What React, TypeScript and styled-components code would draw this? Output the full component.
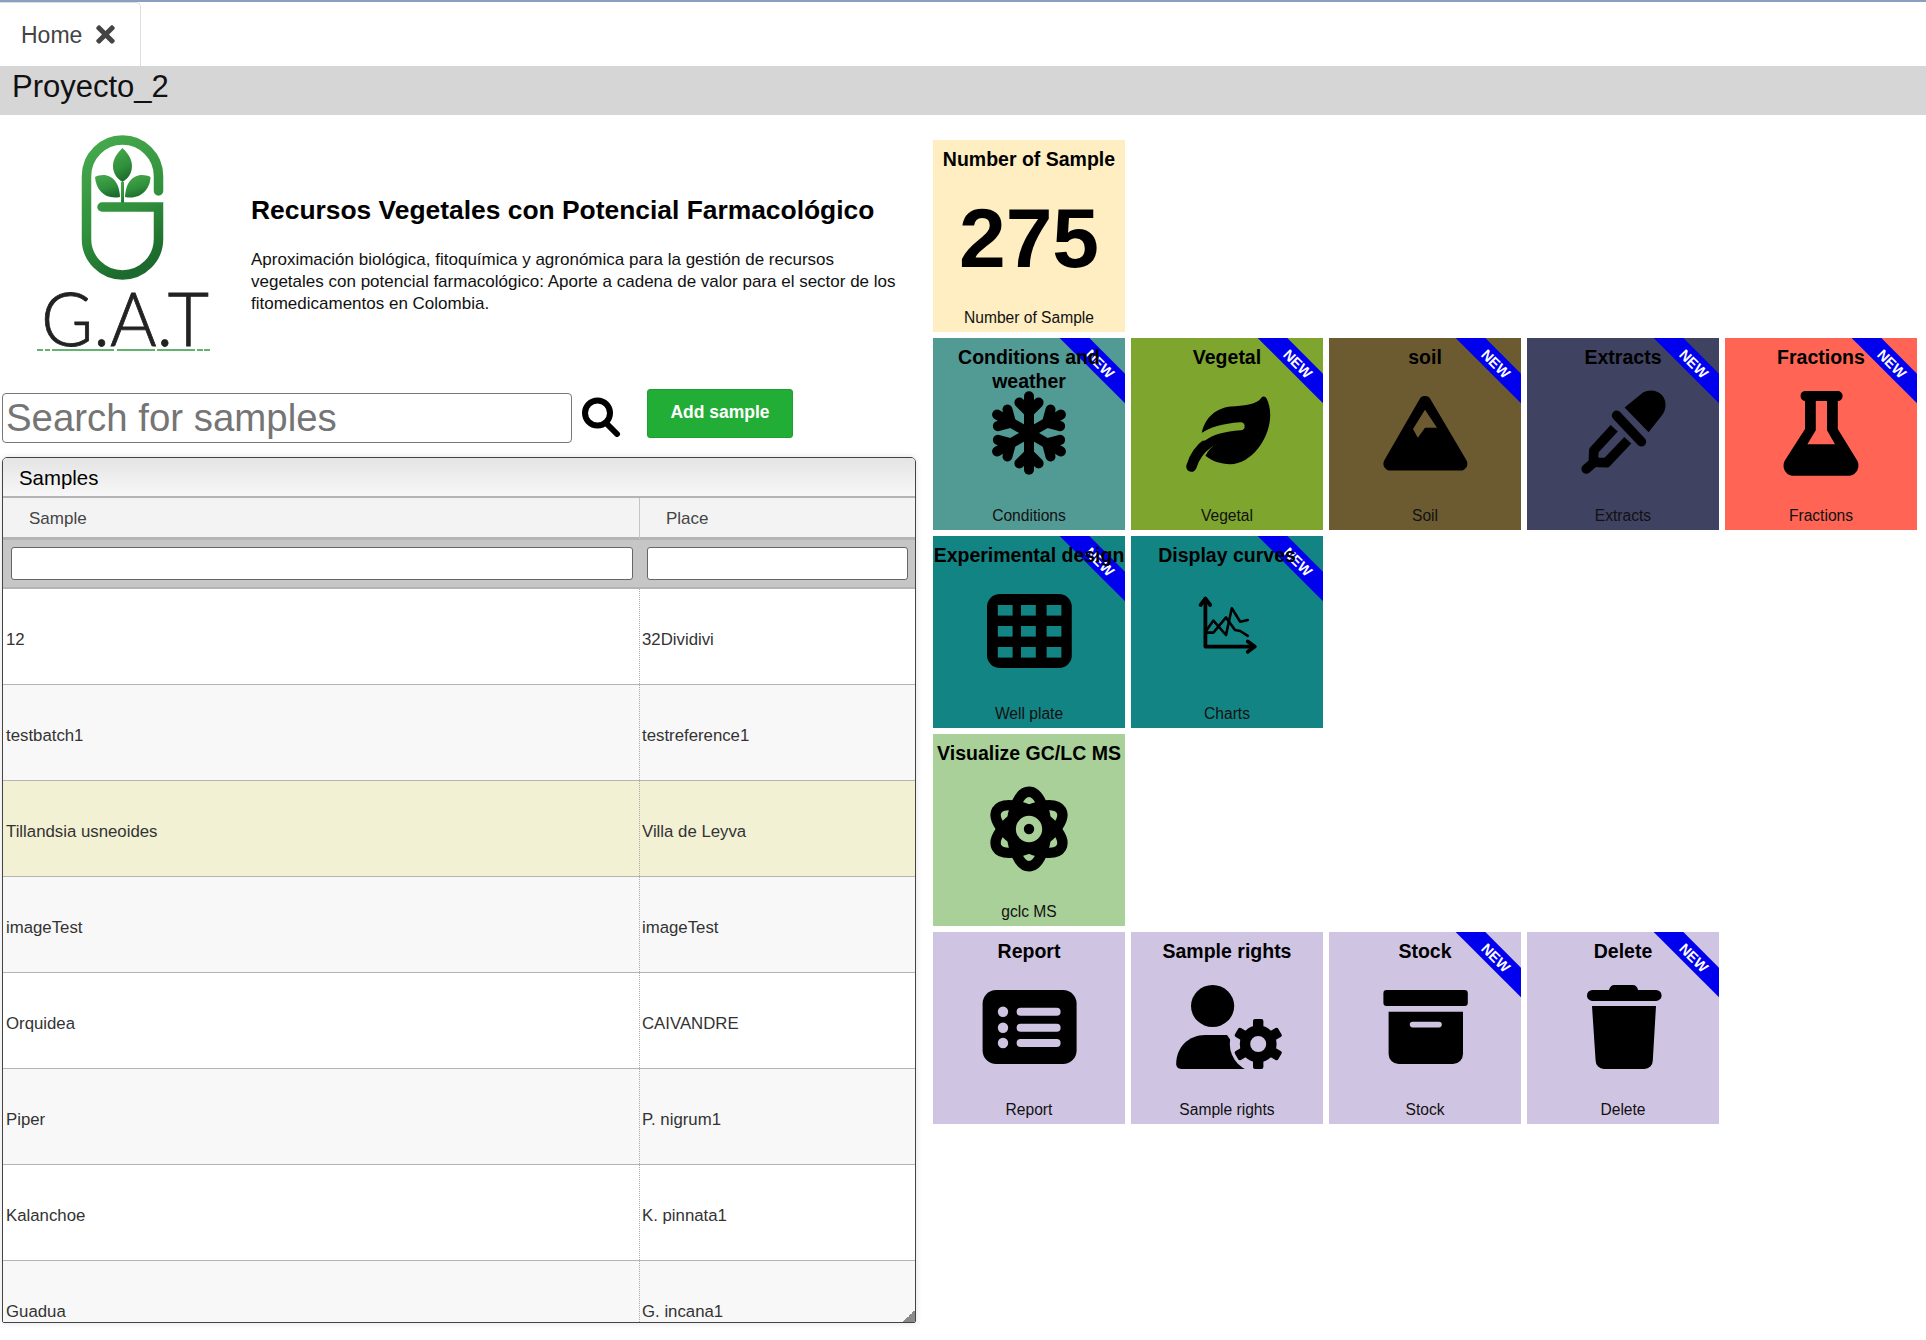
import React from "react";
import styled, { createGlobalStyle } from "styled-components";
import { FaTimes } from "react-icons/fa";

const GlobalStyle = createGlobalStyle`
  html, body {
    margin: 0;
    padding: 0;
    background: #fff;
    font-family: "Liberation Sans", Arial, sans-serif;
    color: #000;
  }
`;

const Page = styled.div`
  width: 1926px;
  height: 1340px;
  overflow: hidden;
  border-top: 2px solid #8d9dbf;
  box-sizing: border-box;
`;

const TabStrip = styled.div`
  height: 64px;
  display: flex;
  align-items: stretch;
`;

const Tab = styled.div`
  width: 141px;
  box-sizing: border-box;
  display: flex;
  align-items: center;
  gap: 10px;
  padding: 2px 0 0 21px;
  border: 1px solid #ddd;
  border-width: 1px 1px 0 0;
  border-top-right-radius: 5px;
  font-size: 23px;
  color: #444;
  svg {
    width: 27px;
    height: 27px;
    margin-top: -3px;
  }
`;

const ProjectBar = styled.div`
  height: 49px;
  background: #d6d6d6;
  padding-left: 12px;
  font-size: 31px;
  line-height: 42px;
  color: #111;
`;

const Main = styled.div`
  display: flex;
  gap: 13px;
`;

const LeftColumn = styled.div`
  width: 918px;
  padding-left: 2px;
`;

const Intro = styled.div`
  height: 274px;
  display: flex;
`;

const LogoBox = styled.div`
  width: 249px;
  flex: none;
  margin-left: -2px;
  margin-right: 2px;
`;

const IntroText = styled.div`
  padding-top: 78px;
`;

const Heading = styled.h1`
  margin: 0 0 22px;
  font-size: 26.4px;
  line-height: 34px;
  font-weight: 700;
  white-space: nowrap;
`;

const Summary = styled.p`
  margin: 0;
  width: 655px;
  font-size: 17px;
  line-height: 22px;
  color: #111;
`;

const SearchRow = styled.div`
  height: 68px;
  display: flex;
  align-items: flex-start;
`;

const SearchInput = styled.input`
  width: 570px;
  height: 50px;
  margin-top: 4px;
  box-sizing: border-box;
  border: 1px solid #777;
  border-radius: 4px;
  padding: 0 3px;
  font-family: inherit;
  font-size: 38.4px;
  &::placeholder {
    color: #757575;
    opacity: 1;
  }
`;

const SearchIconBox = styled.div`
  width: 75px;
  padding: 8px 0 0 9px;
  box-sizing: border-box;
`;

const AddButton = styled.button`
  width: 146px;
  height: 49px;
  background: #21ad36;
  border: 1px solid #1e9d31;
  border-radius: 3px;
  color: #fff;
  font-family: inherit;
  font-weight: 700;
  font-size: 17.5px;
  padding: 0 0 2px;
`;

const Panel = styled.div`
  position: relative;
  width: 914px;
  height: 866px;
  box-sizing: border-box;
  overflow: hidden;
  border: 1px solid #444;
  border-radius: 5px 5px 2px 2px;
  box-shadow: 0 0 6px rgba(0, 0, 0, 0.12);
`;

const PanelTitle = styled.div`
  height: 38px;
  padding-left: 16px;
  font-size: 20.4px;
  line-height: 40px;
  background: linear-gradient(#e4e4e4, #f7f7f7);
  border-bottom: 2px solid #b4b4b4;
`;

const ColumnGrid = styled.div`
  display: grid;
  grid-template-columns: 636px 1fr;
`;

const HeadRow = styled(ColumnGrid)`
  height: 39px;
  background: #f3f3f3;
  color: #444;
  font-size: 17px;
  line-height: 41px;
`;

const HeadCell = styled.div`
  padding-left: 26px;
  & + & {
    border-left: 1px solid #c4c4c4;
  }
`;

const FilterRow = styled(ColumnGrid)`
  height: 52px;
  box-sizing: border-box;
  background: #c6c6c6;
  border-top: 3px solid #b4b4b4;
  border-bottom: 2px solid #b4b4b4;
`;

const FilterCell = styled.div`
  padding: 7px 6px 0 8px;
  & + & {
    padding: 7px 7px 0 8px;
  }
`;

const FilterInput = styled.input`
  width: 100%;
  height: 33px;
  box-sizing: border-box;
  border: 1px solid #666;
  border-radius: 3px;
  background: #fff;
  padding: 0;
`;

const DataRow = styled(ColumnGrid)<{ $bg: string }>`
  height: 96px;
  box-sizing: border-box;
  background: ${(p) => p.$bg};
  border-bottom: 1px solid #b4b4b4;
  font-size: 16.8px;
  color: #333;
`;

const DataCell = styled.div`
  display: flex;
  align-items: center;
  padding: 7px 0 0 3px;
  & + & {
    border-left: 1px dotted #aaa;
    padding-left: 2px;
  }
`;

const ResizeGrip = styled.div`
  position: absolute;
  right: 0;
  bottom: 0;
  width: 12px;
  height: 12px;
  background: linear-gradient(135deg, transparent 50%, #8a8a8a 50%);
`;

const RightColumn = styled.div`
  padding-top: 25px;
  display: flex;
  flex-direction: column;
  gap: 6px;
`;

const TileRow = styled.div`
  display: flex;
  gap: 6px;
`;

const Tile = styled.div<{ $bg: string }>`
  --tile: ${(p) => p.$bg};
  position: relative;
  width: 192px;
  height: 192px;
  overflow: hidden;
  background: ${(p) => p.$bg};
  display: grid;
  grid-template-rows: 47px 96px 1fr;
  justify-items: center;
  text-align: center;
`;

const TileTitle = styled.div`
  position: relative;
  z-index: 1;
  width: 100%;
  padding-top: 7px;
  font-size: 19.5px;
  line-height: 24px;
  font-weight: 700;
`;

const TileCount = styled.div`
  font-size: 84px;
  line-height: 102px;
  font-weight: 700;
`;

const TileLabel = styled.div`
  align-self: end;
  padding-bottom: 4px;
  font-size: 15.6px;
  line-height: 20px;
  color: #111;
`;

const IconSvg = styled.svg`
  width: 96px;
  height: 96px;
  overflow: visible;
`;

const Ribbon = styled.div`
  position: absolute;
  top: 25px;
  left: 167px;
  width: 110px;
  height: 21px;
  margin: -10.5px 0 0 -55px;
  transform: rotate(45deg);
  background: #0000ee;
  color: #fff;
  font-size: 14.5px;
  font-weight: 700;
  line-height: 22px;
  text-align: center;
`;

const TileCut = "var(--tile)";

const Snowflake = () => (
  <IconSvg viewBox="0 0 24 24" fill="none" stroke="#000" strokeWidth="2.5" strokeLinecap="round" strokeLinejoin="round">
    {[0, 60, 120].map((a) => (
      <g key={a} transform={`rotate(${a} 12 12)`}>
        <path d="M12 2.8V21.2" />
        <path d="M9.6 4.4L12 6.8L14.4 4.4" />
        <path d="M9.6 19.6L12 17.2L14.4 19.6" />
      </g>
    ))}
  </IconSvg>
);

const Leaf = () => (
  <IconSvg viewBox="0 0 24 24">
    <path d="M5.7 12C6.5 8 9.5 5.7 13 5.4C16 5.2 19.4 5 20.6 3.2C21 2.7 21.6 2.8 21.9 3.4C22.5 4.6 22.8 6 22.8 7.5C22.8 13.5 18 19.8 12.8 19.8C10.4 19.8 8.2 19 6.6 17.7C8 14.8 11 13.3 15 12.8C16.2 12.7 16.6 11.7 16.4 10.9C16.2 10 15.5 9.8 14.6 9.9C11 10.2 7.8 10.8 5.7 12Z" />
    <path d="M3.1 20.4C4.5 15.5 8.5 12.6 15.4 11.5" fill="none" stroke="#000" strokeWidth="2.6" strokeLinecap="round" />
    <path d="M6.2 12.9C8 11.5 11 10.6 15.4 10.3" fill="none" stroke={TileCut} strokeWidth="2" strokeLinecap="round" />
  </IconSvg>
);

const Mountain = () => (
  <IconSvg viewBox="0 0 24 24">
    <path
      fillRule="evenodd"
      d="M10.6 3.6A1.6 1.6 0 0 1 13.4 3.6L22.4 18.9A1.7 1.7 0 0 1 20.9 21.4H3.3A1.7 1.7 0 0 1 1.8 18.9ZM12 6.2L9 11L10.2 13.2L12 10.7H15Z"
    />
  </IconSvg>
);

const Dropper = () => (
  <IconSvg viewBox="0 0 24 24">
    <path d="M12.4 5.6L17 1.9C18.5 1 20.5 1.2 21.7 2.5C23 3.9 22.9 6.2 21.7 7.6L18.4 11.8Z" />
    <path d="M10.4 7.6L16.6 14.2" fill="none" stroke="#000" strokeWidth="2.4" strokeLinecap="round" />
    <path d="M9.8 10.8L4.7 16.4L4.6 19.3L7.9 19.4L13.2 13.8" fill="none" stroke="#000" strokeWidth="2.4" strokeLinejoin="round" />
    <path d="M2.8 21L4.8 19.3" fill="none" stroke="#000" strokeWidth="2.4" strokeLinecap="round" />
  </IconSvg>
);

const Flask = () => (
  <IconSvg viewBox="0 0 24 24">
    <path
      fillRule="evenodd"
      d="M8 1.5H16.2A1.2 1.2 0 0 1 17.4 2.7A1.2 1.2 0 0 1 16.2 4V11L21 18.8C22 20.6 20.8 22.7 18.8 22.7H5.2C3.2 22.7 2 20.6 3 18.8L8 11V4A1.2 1.2 0 0 1 6.9 2.7A1.2 1.2 0 0 1 8 1.5ZM10.7 4V11.3L8.6 14.8H15.5L13.5 11.3V4Z"
    />
  </IconSvg>
);

const wellCols = [4.2, 10, 16.4];
const wellRows = [5.5, 10.75, 16];

const WellPlate = () => (
  <IconSvg viewBox="0 0 24 24">
    <rect x="1.5" y="2.75" width="21.2" height="18.5" rx="3.2" />
    {wellRows.map((y) =>
      wellCols.map((x) => <rect key={`${x}-${y}`} x={x} y={y} width="3.7" height="2.65" fill={TileCut} />)
    )}
  </IconSvg>
);

const Charts = () => (
  <IconSvg viewBox="0 0 24 24" fill="none" stroke="#000" strokeLinejoin="round" strokeLinecap="round">
    <path d="M6.6 3.9V15.9H18.9" strokeWidth="0.95" />
    <path d="M5.4 5.5L6.6 3.9L7.8 5.5M17.2 14.6L18.9 15.9L17.2 17.2" strokeWidth="0.95" />
    <path d="M6.6 12.2L8.6 9.4L11.75 13L13.2 6.3L15.3 9.7L17.2 9.25" strokeWidth="0.65" />
    <path d="M6.6 12.4H8.6L11.75 8.6L14 11.75L15.3 12L17.2 13.2" strokeWidth="0.65" />
  </IconSvg>
);

const Atom = () => (
  <IconSvg viewBox="0 0 24 24" fill="none" stroke="#000" strokeWidth="2.6">
    {[0, 60, 120].map((a) => (
      <ellipse key={a} cx="12" cy="12" rx="4.3" ry="9.3" transform={`rotate(${a} 12 12)`} />
    ))}
    <circle cx="12" cy="12" r="5" fill="#000" stroke="none" />
    <circle cx="12" cy="12" r="3.3" fill={TileCut} stroke="none" />
    <circle cx="12" cy="12" r="1.3" fill="#000" stroke="none" />
  </IconSvg>
);

const ReportIcon = () => (
  <IconSvg viewBox="0 0 24 24">
    <rect x="0.4" y="2.75" width="23.5" height="18.5" rx="3.4" />
    {[8.2, 12.2, 16].map((y) => (
      <g key={y} fill={TileCut}>
        <circle cx="5.5" cy={y} r="1.3" />
        <rect x="8.9" y={y - 1} width="11" height="2" rx="1" />
      </g>
    ))}
  </IconSvg>
);

const RightsIcon = () => (
  <IconSvg viewBox="0 0 24 24">
    <ellipse cx="8.4" cy="6.75" rx="5.4" ry="5.25" />
    <path d="M-0.7 21.2C-0.7 17 2.5 14 6.5 14H12L18 22.5H0.6C-0.2 22.5 -0.7 22 -0.7 21.2Z" />
    <circle cx="19.8" cy="16.25" r="7.1" fill={TileCut} />
    {[0, 60, 120, 180, 240, 300].map((a) => (
      <rect key={a} x="18.5" y="10" width="2.6" height="3" rx="0.5" transform={`rotate(${a} 19.8 16.25)`} />
    ))}
    <circle cx="19.8" cy="16.25" r="3.3" fill="none" stroke="#000" strokeWidth="2.6" />
  </IconSvg>
);

const StockIcon = () => (
  <IconSvg viewBox="0 0 24 24">
    <rect x="1.6" y="2.75" width="21.1" height="4" rx="0.8" />
    <path
      fillRule="evenodd"
      d="M2.9 8.2H21.5V18.7A2.5 2.5 0 0 1 19 21.25H5.4A2.5 2.5 0 0 1 2.9 18.7ZM8.9 10.7A0.7 0.7 0 0 0 8.9 12.1H15.5A0.7 0.7 0 0 0 15.5 10.7Z"
    />
  </IconSvg>
);

const TrashIcon = () => (
  <IconSvg viewBox="0 0 24 24">
    <path d="M3 4.1A1.35 1.35 0 0 1 4.35 2.75H8.5C8.65 2 9.15 1.5 9.85 1.5H14.45C15.15 1.5 15.65 2 15.75 2.75H20.25A1.35 1.35 0 0 1 21.65 4.1A1.4 1.4 0 0 1 20.25 5.5H4.35A1.35 1.35 0 0 1 3 4.1Z" />
    <path d="M4.25 6.75H20.25L19.45 20.4A2.1 2.1 0 0 1 17.35 22.5H7.25A2.1 2.1 0 0 1 5.15 20.4Z" />
  </IconSvg>
);

const Logo = () => (
  <svg width="249" height="270" viewBox="0 115 249 270">
    <defs>
      <linearGradient id="logoGreen" x1="0.2" y1="0" x2="0.5" y2="1">
        <stop offset="0" stopColor="#46a84c" />
        <stop offset="0.6" stopColor="#2f8f3b" />
        <stop offset="1" stopColor="#1c6a2d" />
      </linearGradient>
    </defs>
    <g fill="url(#logoGreen)">
      <path d="M122.5 148C130 155 134 163 131 172C129 178 125 180 122.5 182C120 180 116 178 114 172C111 163 115 155 122.5 148Z" />
      <path d="M95 177C105 172 119 176 120 197C105 200 96 190 95 177Z" />
      <path d="M150.5 177C140 172 126 176 125 197C140 200 150 190 150.5 177Z" />
      <rect x="121" y="182" width="3" height="24" />
    </g>
    <path
      d="M158.5 191V176A36 36 0 0 0 86.5 176V239A36 36 0 0 0 158.5 239V207H102"
      fill="none"
      stroke="url(#logoGreen)"
      strokeWidth="9.5"
      strokeLinecap="round"
    />
    <text
      x="41"
      y="346"
      fontFamily="Lato, sans-serif"
      fontWeight="300"
      fontSize="74"
      fill="#222"
      stroke="#222"
      strokeWidth="0.8"
      textLength="168"
      lengthAdjust="spacingAndGlyphs"
    >
      G.A.T
    </text>
    <path d="M37 350H212" stroke="#63b26e" strokeWidth="2" strokeDasharray="6 2 5 2 62 3 38 2 38 2 6 1" />
  </svg>
);

const SearchGlyph = () => (
  <svg width="40" height="40" viewBox="0 0 40 40" fill="none" stroke="#000" strokeWidth="6">
    <circle cx="16.5" cy="16" r="12.5" />
    <path d="M25 26L36 37" strokeLinecap="round" />
  </svg>
);

const samples = [
  ["12", "32Dividivi"],
  ["testbatch1", "testreference1"],
  ["Tillandsia usneoides", "Villa de Leyva"],
  ["imageTest", "imageTest"],
  ["Orquidea", "CAIVANDRE"],
  ["Piper", "P. nigrum1"],
  ["Kalanchoe", "K. pinnata1"],
  ["Guadua", "G. incana1"],
];

const rowColor = (i: number) => {
  if (i === 2) return "#f2f1d3";
  return i % 2 === 0 ? "#fff" : "#f8f8f8";
};

type TileData = {
  title: string;
  label: string;
  bg: string;
  icon: React.ReactNode;
  isNew?: boolean;
};

const tileRows: TileData[][] = [
  [
    { title: "Conditions and weather", label: "Conditions", bg: "#529a94", icon: <Snowflake />, isNew: true },
    { title: "Vegetal", label: "Vegetal", bg: "#7ea52d", icon: <Leaf />, isNew: true },
    { title: "soil", label: "Soil", bg: "#6c5b31", icon: <Mountain />, isNew: true },
    { title: "Extracts", label: "Extracts", bg: "#3f4261", icon: <Dropper />, isNew: true },
    { title: "Fractions", label: "Fractions", bg: "#ff6454", icon: <Flask />, isNew: true },
  ],
  [
    { title: "Experimental design", label: "Well plate", bg: "#138484", icon: <WellPlate />, isNew: true },
    { title: "Display curves", label: "Charts", bg: "#138484", icon: <Charts />, isNew: true },
  ],
  [{ title: "Visualize GC/LC MS", label: "gclc MS", bg: "#a9d098", icon: <Atom /> }],
  [
    { title: "Report", label: "Report", bg: "#d0c4e3", icon: <ReportIcon /> },
    { title: "Sample rights", label: "Sample rights", bg: "#d0c4e3", icon: <RightsIcon /> },
    { title: "Stock", label: "Stock", bg: "#d0c4e3", icon: <StockIcon />, isNew: true },
    { title: "Delete", label: "Delete", bg: "#d0c4e3", icon: <TrashIcon />, isNew: true },
  ],
];

export default function App() {
  return (
    <Page>
      <GlobalStyle />
      <TabStrip>
        <Tab>
          Home <FaTimes />
        </Tab>
      </TabStrip>
      <ProjectBar>Proyecto_2</ProjectBar>
      <Main>
        <LeftColumn>
          <Intro>
            <LogoBox>
              <Logo />
            </LogoBox>
            <IntroText>
              <Heading>Recursos Vegetales con Potencial Farmacológico</Heading>
              <Summary>
                Aproximación biológica, fitoquímica y agronómica para la gestión de recursos vegetales con potencial
                farmacológico: Aporte a cadena de valor para el sector de los fitomedicamentos en Colombia.
              </Summary>
            </IntroText>
          </Intro>
          <SearchRow>
            <SearchInput placeholder="Search for samples" />
            <SearchIconBox>
              <SearchGlyph />
            </SearchIconBox>
            <AddButton>Add sample</AddButton>
          </SearchRow>
          <Panel>
            <PanelTitle>Samples</PanelTitle>
            <HeadRow>
              <HeadCell>Sample</HeadCell>
              <HeadCell>Place</HeadCell>
            </HeadRow>
            <FilterRow>
              <FilterCell>
                <FilterInput />
              </FilterCell>
              <FilterCell>
                <FilterInput />
              </FilterCell>
            </FilterRow>
            {samples.map(([sample, place], i) => (
              <DataRow key={sample} $bg={rowColor(i)}>
                <DataCell>{sample}</DataCell>
                <DataCell>{place}</DataCell>
              </DataRow>
            ))}
            <ResizeGrip />
          </Panel>
        </LeftColumn>
        <RightColumn>
          <TileRow>
            <Tile $bg="#ffeec2">
              <TileTitle>Number of Sample</TileTitle>
              <TileCount>275</TileCount>
              <TileLabel>Number of Sample</TileLabel>
            </Tile>
          </TileRow>
          {tileRows.map((row) => (
            <TileRow key={row[0].title}>
              {row.map((t) => (
                <Tile key={t.title} $bg={t.bg}>
                  <TileTitle>{t.title}</TileTitle>
                  {t.icon}
                  <TileLabel>{t.label}</TileLabel>
                  {t.isNew && <Ribbon>NEW</Ribbon>}
                </Tile>
              ))}
            </TileRow>
          ))}
        </RightColumn>
      </Main>
    </Page>
  );
}
